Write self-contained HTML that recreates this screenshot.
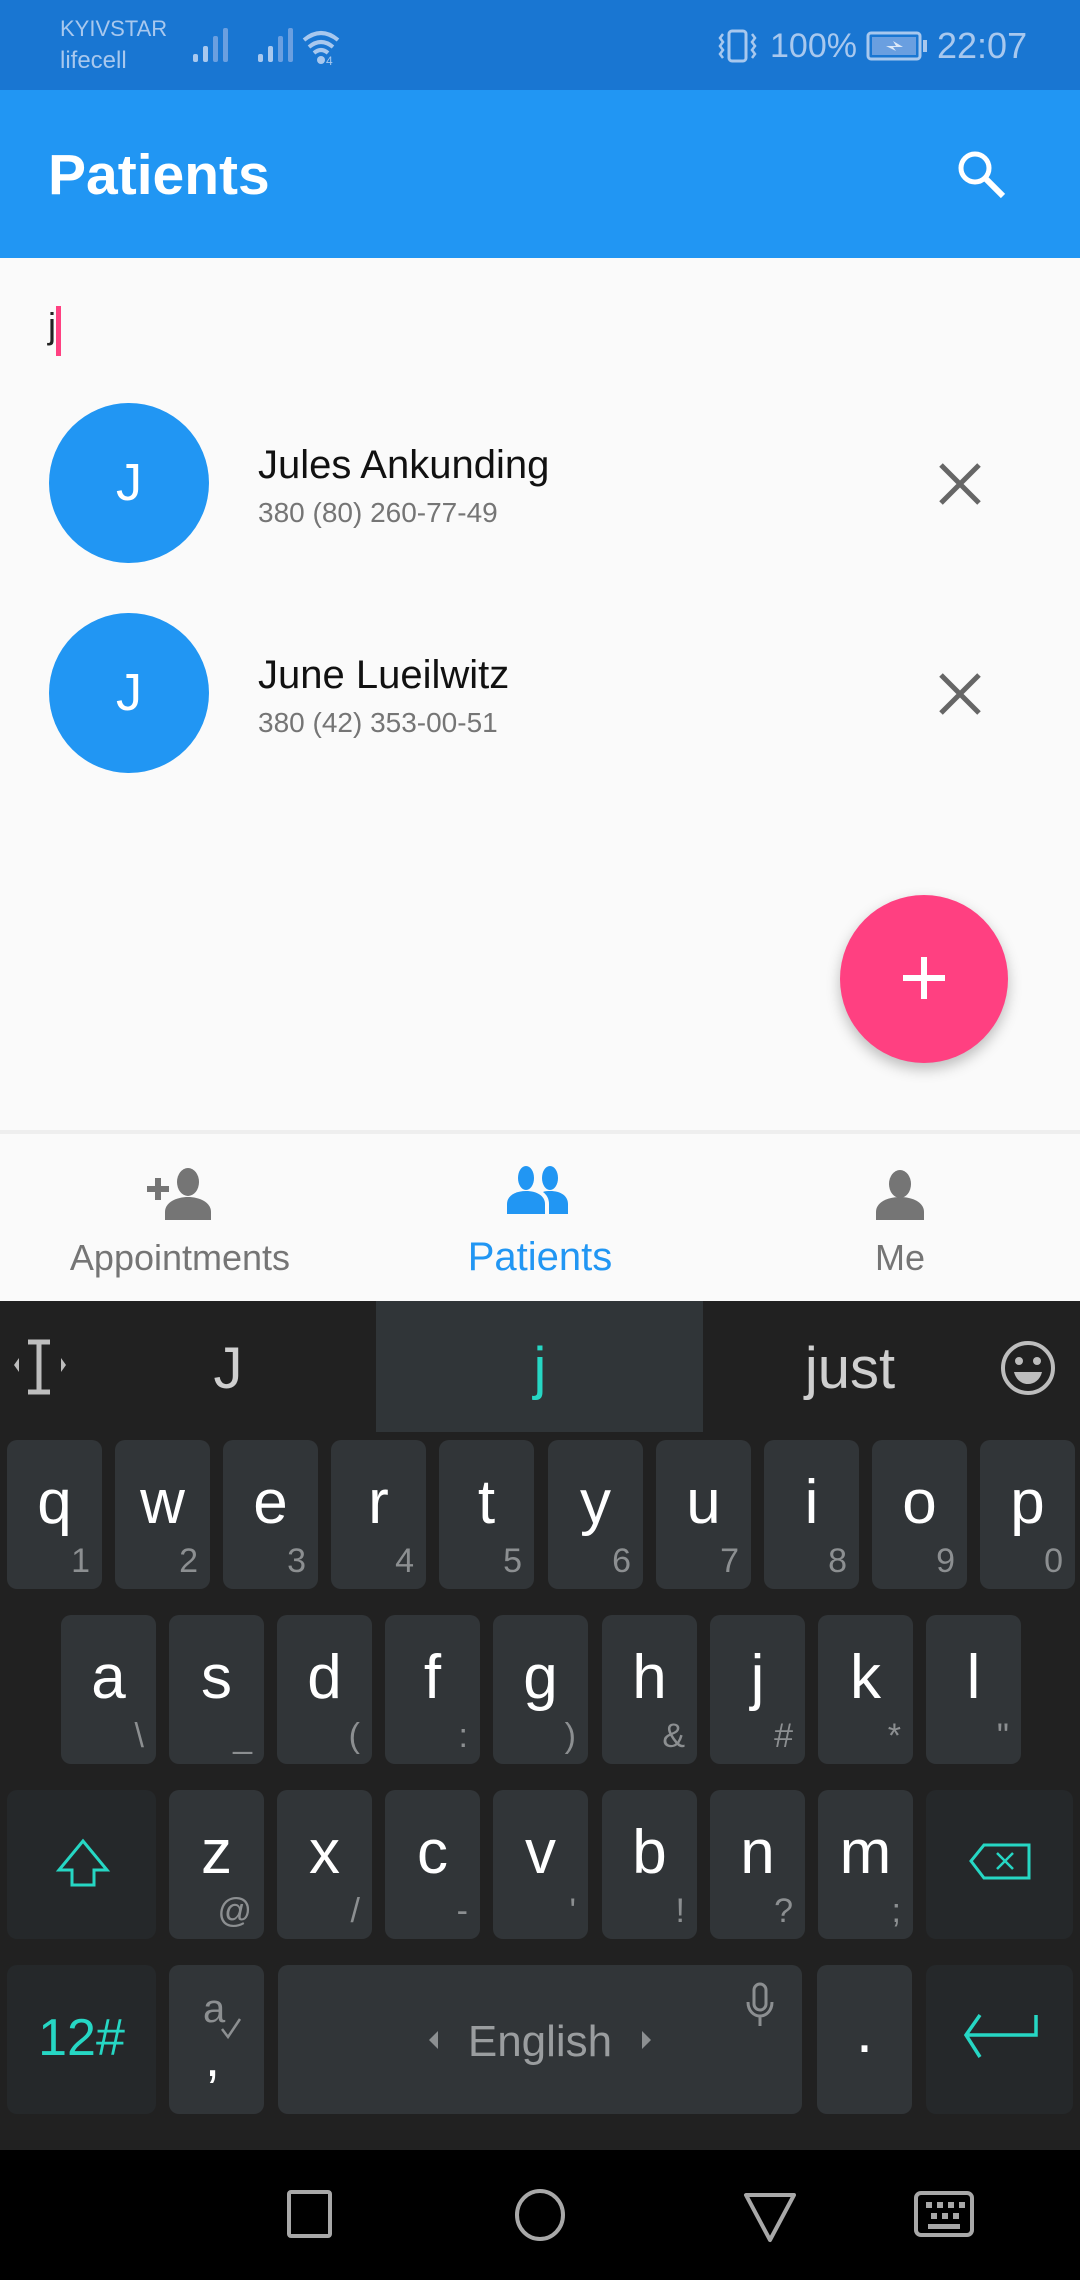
<!DOCTYPE html>
<html><head><meta charset="utf-8"><style>
*{margin:0;padding:0;box-sizing:border-box}
body{width:1080px;height:2280px;position:relative;overflow:hidden;background:#fafafa;font-family:"Liberation Sans",sans-serif}
.a{position:absolute}
.k{position:absolute;background:#313538;border-radius:10px;width:95px;height:149px;color:#fff}
.k .m{position:absolute;left:0;right:0;text-align:center;top:28px;font-size:62px;line-height:70px}
.k .s{position:absolute;right:12px;bottom:8px;font-size:34px;color:#8c8f91;line-height:40px}
.f{background:#25282a}
</style></head><body>
<div class="a" style="left:0;top:0;width:1080px;height:90px;background:#1976d2"></div>
<div class="a" style="left:60px;top:16px;font-size:22px;color:#a8c8ee;line-height:26px">KYIVSTAR</div>
<div class="a" style="left:60px;top:48px;font-size:24px;color:#a8c8ee;line-height:26px">lifecell</div>
<svg class="a" style="left:190px;top:26px" width="160" height="40" viewBox="0 0 160 40">
<g fill="#a8c8ee"><rect x="3" y="28" width="5" height="8" rx="2"/><rect x="13" y="20" width="5" height="16" rx="2"/></g>
<g fill="#6a9fe0"><rect x="23" y="10" width="5" height="26" rx="2"/><rect x="33" y="2" width="5" height="34" rx="2"/></g>
<g fill="#a8c8ee"><rect x="68" y="28" width="5" height="8" rx="2"/><rect x="78" y="20" width="5" height="16" rx="2"/></g>
<g fill="#6a9fe0"><rect x="88" y="10" width="5" height="26" rx="2"/><rect x="98" y="2" width="5" height="34" rx="2"/></g>
<g fill="none" stroke="#a8c8ee" stroke-width="4"><path d="M114 14 Q131 0 148 14"/><path d="M119 21 Q131 11 143 21"/><path d="M124 27 Q131 21 138 27"/></g>
<circle cx="131" cy="34" r="4" fill="#a8c8ee"/><text x="136" y="39" font-size="12" fill="#a8c8ee">4</text>
</svg>
<svg class="a" style="left:718px;top:28px" width="40" height="36" viewBox="0 0 40 36"><rect x="11" y="3" width="17" height="30" rx="3" fill="none" stroke="#a8c8ee" stroke-width="3"/><path d="M5 6l-3 4 3 4-3 4 3 4-3 4 3 4M34 6l3 4-3 4 3 4-3 4 3 4-3 4" fill="none" stroke="#a8c8ee" stroke-width="2.5"/></svg>
<div class="a" style="left:770px;top:26px;font-size:34px;color:#a8c8ee;line-height:40px">100%</div>
<svg class="a" style="left:866px;top:31px" width="62" height="30" viewBox="0 0 62 30"><rect x="2" y="2" width="52" height="26" rx="3" fill="none" stroke="#a8c8ee" stroke-width="3"/><rect x="6" y="6" width="44" height="18" fill="#6a9fe0"/><rect x="57" y="9" width="4" height="12" fill="#a8c8ee"/><path d="M20 15h10l-3-5 10 6H27l3 4z" fill="#dce9f8"/></svg>
<div class="a" style="left:937px;top:26px;font-size:36px;color:#a8c8ee;line-height:40px">22:07</div>
<div class="a" style="left:0;top:90px;width:1080px;height:168px;background:#2196f3"></div>
<div class="a" style="left:48px;top:142px;font-size:57px;font-weight:bold;color:#fff;line-height:66px">Patients</div>
<svg class="a" style="left:953px;top:146px" width="60" height="60" viewBox="0 0 60 60"><circle cx="22" cy="22" r="14" fill="none" stroke="#fff" stroke-width="5"/><path d="M32 32l18 18" stroke="#fff" stroke-width="6"/></svg>
<div class="a" style="left:48px;top:304px;font-size:36px;color:#222;line-height:44px">j</div>
<div class="a" style="left:56px;top:306px;width:5px;height:50px;background:#ff4081"></div>
<div class="a" style="left:49px;top:403px;width:160px;height:160px;border-radius:50%;background:#2196f3;color:#fff;font-size:52px;text-align:center;line-height:160px">J</div>
<div class="a" style="left:258px;top:441px;font-size:40px;color:#111;line-height:48px">Jules Ankunding</div>
<div class="a" style="left:258px;top:496px;font-size:28px;color:#757575;line-height:34px">380 (80) 260-77-49</div>
<svg class="a" style="left:938px;top:462px" width="44" height="44" viewBox="0 0 44 44"><path d="M3 3l38 38M41 3L3 41" stroke="#666" stroke-width="5"/></svg>
<div class="a" style="left:49px;top:613px;width:160px;height:160px;border-radius:50%;background:#2196f3;color:#fff;font-size:52px;text-align:center;line-height:160px">J</div>
<div class="a" style="left:258px;top:651px;font-size:40px;color:#111;line-height:48px">June Lueilwitz</div>
<div class="a" style="left:258px;top:706px;font-size:28px;color:#757575;line-height:34px">380 (42) 353-00-51</div>
<svg class="a" style="left:938px;top:672px" width="44" height="44" viewBox="0 0 44 44"><path d="M3 3l38 38M41 3L3 41" stroke="#666" stroke-width="5"/></svg>
<div class="a" style="left:840px;top:895px;width:168px;height:168px;border-radius:50%;background:#ff4081;box-shadow:0 6px 14px rgba(0,0,0,.25)"></div>
<div class="a" style="left:903px;top:975px;width:42px;height:6px;background:#fff"></div>
<div class="a" style="left:921px;top:957px;width:6px;height:42px;background:#fff"></div>
<div class="a" style="left:0;top:1130px;width:1080px;height:171px;background:#fafafa;border-top:4px solid #eee"></div>
<svg class="a" style="left:145px;top:1168px" width="70" height="52" viewBox="0 0 70 52"><rect x="2" y="18" width="22" height="6" fill="#757575"/><rect x="10" y="10" width="6" height="22" fill="#757575"/><ellipse cx="43" cy="14" rx="11" ry="14" fill="#757575"/><path d="M20 52v-8c0-10 12-15 23-15s23 5 23 15v8z" fill="#757575"/></svg>
<div class="a" style="left:0;top:1238px;width:360px;text-align:center;font-size:36px;color:#757575;line-height:40px">Appointments</div>
<svg class="a" style="left:505px;top:1166px" width="70" height="48" viewBox="0 0 70 48"><ellipse cx="21" cy="12" rx="8" ry="12" fill="#2196f3"/><ellipse cx="45" cy="12" rx="8" ry="12" fill="#2196f3"/><path d="M2 48v-10c0-8 8-13 19-13s19 5 19 13v10z" fill="#2196f3"/><path d="M44 48v-10c0-5-2-9-6-12 2-1 5-1 7-1 11 0 18 5 18 13v10z" fill="#2196f3"/></svg>
<div class="a" style="left:360px;top:1235px;width:360px;text-align:center;font-size:40px;color:#2196f3;line-height:44px">Patients</div>
<svg class="a" style="left:874px;top:1170px" width="52" height="50" viewBox="0 0 52 50"><ellipse cx="26" cy="14" rx="11" ry="14" fill="#757575"/><path d="M2 50v-8c0-10 12-15 24-15s24 5 24 15v8z" fill="#757575"/></svg>
<div class="a" style="left:720px;top:1238px;width:360px;text-align:center;font-size:36px;color:#757575;line-height:40px">Me</div>
<div class="a" style="left:0;top:1301px;width:1080px;height:849px;background:#212121"></div>
<div class="a" style="left:376px;top:1301px;width:327px;height:131px;background:#303538"></div>
<svg class="a" style="left:12px;top:1338px" width="56" height="60" viewBox="0 0 56 60"><path d="M16 4h22M16 54h22M27 4v50" stroke="#bdbdbd" stroke-width="5" fill="none"/><path d="M2 27l5-7v14zM54 27l-5-7v14z" fill="#bdbdbd"/></svg>
<div class="a" style="left:178px;top:1336px;width:100px;text-align:center;font-size:58px;color:#cfcfcf;line-height:66px">J</div>
<div class="a" style="left:490px;top:1336px;width:100px;text-align:center;font-size:58px;line-height:66px;color:#26d7c4">j</div>
<div class="a" style="left:780px;top:1336px;width:140px;text-align:center;font-size:58px;color:#cfcfcf;line-height:66px">just</div>
<svg class="a" style="left:999px;top:1339px" width="58" height="58" viewBox="0 0 58 58"><circle cx="29" cy="29" r="25" fill="none" stroke="#bdbdbd" stroke-width="4"/><circle cx="20" cy="22" r="4" fill="#bdbdbd"/><circle cx="38" cy="22" r="4" fill="#bdbdbd"/><path d="M15 33h28c-2 8-8 12-14 12s-12-4-14-12z" fill="#bdbdbd"/></svg>
<div class="k" style="left:7px;top:1440px"><span class="m">q</span><span class="s">1</span></div>
<div class="k" style="left:115px;top:1440px"><span class="m">w</span><span class="s">2</span></div>
<div class="k" style="left:223px;top:1440px"><span class="m">e</span><span class="s">3</span></div>
<div class="k" style="left:331px;top:1440px"><span class="m">r</span><span class="s">4</span></div>
<div class="k" style="left:439px;top:1440px"><span class="m">t</span><span class="s">5</span></div>
<div class="k" style="left:548px;top:1440px"><span class="m">y</span><span class="s">6</span></div>
<div class="k" style="left:656px;top:1440px"><span class="m">u</span><span class="s">7</span></div>
<div class="k" style="left:764px;top:1440px"><span class="m">i</span><span class="s">8</span></div>
<div class="k" style="left:872px;top:1440px"><span class="m">o</span><span class="s">9</span></div>
<div class="k" style="left:980px;top:1440px"><span class="m">p</span><span class="s">0</span></div>
<div class="k" style="left:61px;top:1615px"><span class="m">a</span><span class="s">\</span></div>
<div class="k" style="left:169px;top:1615px"><span class="m">s</span><span class="s">_</span></div>
<div class="k" style="left:277px;top:1615px"><span class="m">d</span><span class="s">(</span></div>
<div class="k" style="left:385px;top:1615px"><span class="m">f</span><span class="s">:</span></div>
<div class="k" style="left:493px;top:1615px"><span class="m">g</span><span class="s">)</span></div>
<div class="k" style="left:602px;top:1615px"><span class="m">h</span><span class="s">&amp;</span></div>
<div class="k" style="left:710px;top:1615px"><span class="m">j</span><span class="s">#</span></div>
<div class="k" style="left:818px;top:1615px"><span class="m">k</span><span class="s">*</span></div>
<div class="k" style="left:926px;top:1615px"><span class="m">l</span><span class="s">"</span></div>
<div class="k f" style="left:7px;top:1790px;width:149px"><svg class="a" style="left:48px;top:48px" width="56" height="50" viewBox="0 0 56 50"><path d="M28 3L4 32h13v15h22V32h13z" fill="none" stroke="#26d7c4" stroke-width="3"/></svg></div>
<div class="k" style="left:169px;top:1790px"><span class="m">z</span><span class="s">@</span></div>
<div class="k" style="left:277px;top:1790px"><span class="m">x</span><span class="s">/</span></div>
<div class="k" style="left:385px;top:1790px"><span class="m">c</span><span class="s">-</span></div>
<div class="k" style="left:493px;top:1790px"><span class="m">v</span><span class="s">'</span></div>
<div class="k" style="left:602px;top:1790px"><span class="m">b</span><span class="s">!</span></div>
<div class="k" style="left:710px;top:1790px"><span class="m">n</span><span class="s">?</span></div>
<div class="k" style="left:818px;top:1790px"><span class="m">m</span><span class="s">;</span></div>
<div class="k f" style="left:926px;top:1790px;width:147px"><svg class="a" style="left:42px;top:52px" width="64" height="40" viewBox="0 0 64 40"><path d="M16 3h45v33H16L3 19z" fill="none" stroke="#26d7c4" stroke-width="3"/><path d="M29 11l16 16M45 11L29 27" stroke="#26d7c4" stroke-width="2.5"/></svg></div>
<div class="k f" style="left:7px;top:1965px;width:149px"><span class="m" style="top:38px;font-size:52px;color:#26d7c4">12#</span></div>
<div class="k" style="left:169px;top:1965px"><span class="a" style="left:34px;top:22px;font-size:40px;color:#8c8f91">a</span><svg class="a" style="left:50px;top:52px" width="24" height="24" viewBox="0 0 24 24"><path d="M3 12l6 8 12-18" fill="none" stroke="#8c8f91" stroke-width="2.5"/></svg><span class="a" style="left:36px;top:62px;font-size:54px">,</span></div>
<div class="k" style="left:278px;top:1965px;width:524px"><span class="m" style="top:42px;font-size:44px;color:#9a9d9f">English</span><svg class="a" style="left:148px;top:64px" width="14" height="22" viewBox="0 0 14 22"><path d="M12 2L3 11l9 9z" fill="#8c8f91"/></svg><svg class="a" style="left:362px;top:64px" width="14" height="22" viewBox="0 0 14 22"><path d="M2 2l9 9-9 9z" fill="#8c8f91"/></svg><svg class="a" style="left:467px;top:17px" width="30" height="46" viewBox="0 0 30 46"><rect x="9" y="2" width="12" height="26" rx="6" fill="none" stroke="#8c8f91" stroke-width="3"/><path d="M3 20c0 9 6 14 12 14s12-5 12-14M15 34v10" fill="none" stroke="#8c8f91" stroke-width="3"/></svg></div>
<div class="k" style="left:817px;top:1965px"><span class="m" style="top:32px">.</span></div>
<div class="k f" style="left:926px;top:1965px;width:147px"><svg class="a" style="left:36px;top:48px" width="80" height="50" viewBox="0 0 80 50"><path d="M74 2v20H4M18 2L4 22l14 22" fill="none" stroke="#26d7c4" stroke-width="3.5"/></svg></div>
<div class="a" style="left:0;top:2150px;width:1080px;height:130px;background:#000"></div>
<svg class="a" style="left:0;top:2150px" width="1080" height="130" viewBox="0 0 1080 130">
<g fill="none" stroke="#a8a8a8" stroke-width="4"><rect x="289" y="42" width="41" height="44" rx="2"/><ellipse cx="540" cy="65" rx="23" ry="24"/><path d="M746 45h48l-24 45z" stroke-linejoin="round"/><rect x="916" y="43" width="56" height="42" rx="5"/></g>
<g fill="#a8a8a8"><rect x="926" y="52" width="6" height="6"/><rect x="937" y="52" width="6" height="6"/><rect x="948" y="52" width="6" height="6"/><rect x="959" y="52" width="6" height="6"/><rect x="931" y="63" width="6" height="6"/><rect x="942" y="63" width="6" height="6"/><rect x="953" y="63" width="6" height="6"/><rect x="928" y="74" width="32" height="5"/></g>
</svg>
</body></html>
